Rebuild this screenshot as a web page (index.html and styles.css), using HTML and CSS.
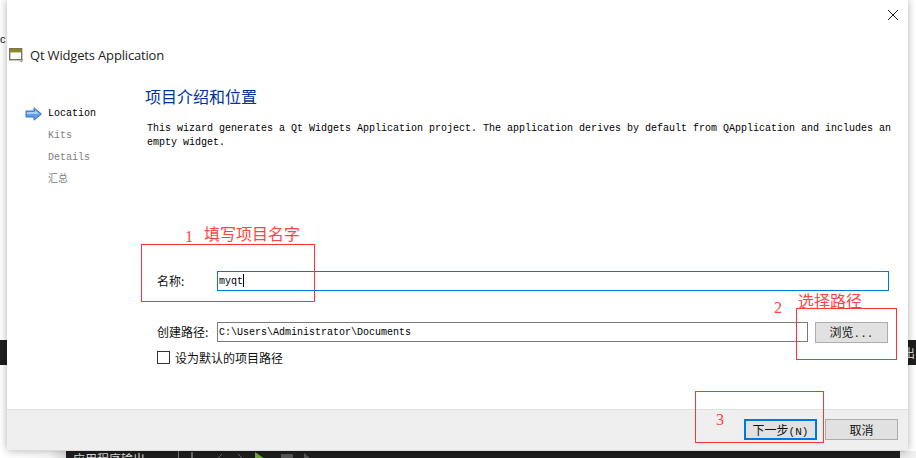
FILE: index.html
```html
<!DOCTYPE html>
<html lang="zh">
<head>
<meta charset="utf-8">
<title>Qt Widgets Application</title>
<link rel="stylesheet" href="styles.css">
</head>
<body>
<div class="desk-stub">c</div>
<div class="desk-band band-left"></div>
<div class="desk-band band-right">出</div>
<div class="desk-bottom">
  <span class="output-label">应用程序输出</span>
  <span class="tool-sep"></span>
  <svg class="tools" width="140" height="7" viewBox="0 0 140 7"><path d="M13 0v7" stroke="#b5b5b5" fill="none"/><path d="M39 6l4-4M59 2l4 4" stroke="#666" fill="none"/><path d="M76 0l10 7H76z" fill="#6fa83a"/><rect x="102" y="2" width="12" height="5" fill="#555"/><path d="M125 1l7 6h-7z" fill="#555"/></svg>
</div>
<main class="wizard">
  <button class="close" aria-label="关闭"><svg width="10" height="10" viewBox="0 0 10 10"><path d="M0 0l10 10M10 0L0 10" stroke="#222" fill="none"/></svg></button>
  <header class="title-row">
    <svg class="app-icon" width="14" height="15" viewBox="0 0 14 15"><rect x=".7" y=".7" width="12" height="11" fill="#fff" stroke="#77765c" stroke-width="1.4"/><rect x="1" y="1" width="11.5" height="3.4" fill="#8b8726"/><path d="M11 12.5l1.5 1.5 1-2.5" stroke="#8a8a8a" fill="none"/></svg>
    <span class="title-text">Qt Widgets Application</span>
  </header>
  <div class="body-row">
    <nav class="steps">
      <div class="step step-active">
        <svg class="step-arrow" width="18" height="14" viewBox="0 0 18 14"><path d="M1 4h8V.8L16.5 7 9 13.2V10H1z" fill="#5f9de8" stroke="#3b74bd"/><path d="M2 5h8V3l4 4H2z" fill="#a9cdf5"/></svg>
        <span>Location</span>
      </div>
      <div class="step">Kits</div>
      <div class="step">Details</div>
      <div class="step">汇总</div>
    </nav>
    <section class="content">
      <h1 class="heading">项目介绍和位置</h1>
      <p class="intro">This wizard generates a Qt Widgets Application project. The application derives by default from QApplication and includes an empty widget.</p>
      <div class="form">
        <div class="field field-name">
          <label class="field-label">名称:</label>
          <div class="input input-focus">myqt<span class="caret"></span></div>
        </div>
        <div class="field field-path">
          <label class="field-label">创建路径:</label>
          <div class="input input-path">C:\Users\Administrator\Documents</div>
          <button class="btn btn-browse">浏览<span class="mono">...</span></button>
        </div>
        <div class="check-row">
          <span class="check"></span>
          <span>设为默认的项目路径</span>
        </div>
      </div>
    </section>
  </div>
  <footer class="footer">
    <button class="btn btn-default">下一步<span class="mono">(N)</span></button>
    <button class="btn">取消</button>
  </footer>
  <div class="mark box1"></div>
  <div class="note num1">1</div>
  <div class="note txt1">填写项目名字</div>
  <div class="mark box2"></div>
  <div class="note num2">2</div>
  <div class="note txt2">选择路径</div>
  <div class="mark box3"></div>
  <div class="note num3">3</div>
</main>
</body>
</html>
```
FILE: styles.css
```css
* { box-sizing: border-box; }
html, body { margin: 0; padding: 0; }
body {
  width: 916px;
  height: 458px;
  position: relative;
  overflow: hidden;
  background: #fff;
  font-family: "Liberation Mono", "Noto Sans CJK SC", monospace;
  font-size: 10px;
  color: #000;
}
.desk-stub {
  position: absolute; left: 0; top: 33px;
  font: 11px/12px "Liberation Sans", sans-serif;
  color: #111;
}
.desk-band {
  position: absolute; top: 340px; height: 25px;
  background: #1f1f1f; color: #ddd; overflow: hidden;
  font: 12px/25px "Noto Sans CJK SC", sans-serif;
}
.band-left { left: 0; width: 8px; }
.band-right { left: 908px; width: 8px; text-indent: -5px; }
.desk-bottom {
  position: absolute; left: 0; right: 0; top: 451px; height: 7px;
  padding-left: 66px;
  background: linear-gradient(90deg, #fff 0, #f4f4f4 50px, #d8d8d8 66px, #1e1e1e 66px, #1e1e1e 900px, #e4e4e4 900px, #f2f2f2 100%);
  display: flex; align-items: flex-start; overflow: hidden;
  color: #ddd;
}
.output-label {
  font: 12px/14px "Noto Sans CJK SC", sans-serif;
  padding-left: 7px; margin-top: 1px; width: 112px;
}
.tool-sep { width: 1px; height: 7px; background: #777; }
.tools { margin-top: 1px; }

.wizard {
  position: absolute; left: 7px; top: 0;
  width: 901px; height: 450px;
  background: #fff;
  box-shadow: 0 0 8px rgba(0,0,0,.32);
  display: flex; flex-direction: column;
}
.close {
  position: absolute; right: 10px; top: 10px;
  padding: 0; border: 0; background: none; display: flex;
}
.title-row {
  display: flex; align-items: center; gap: 7px;
  height: 24px; margin-top: 43px; padding-left: 2px;
  flex: none;
}
.app-icon { flex: none; }
.title-text {
  font: 13px/18px "Open Sans", "Noto Sans", sans-serif;
  letter-spacing: -.17px;
  color: #222;
}
.body-row { flex: 1; display: flex; min-height: 0; }
.steps {
  width: 138px; flex: none; padding-top: 40px;
  display: flex; flex-direction: column; gap: 8px;
}
.step {
  height: 14px; line-height: 14px; padding-left: 41px;
  color: #808080; position: relative;
}
.step-active { color: #000; }
.step-arrow { position: absolute; left: 18px; top: 0; }
.content { flex: 1; display: flex; flex-direction: column; min-width: 0; }
.heading {
  margin: 18px 0 0;
  font: 400 16px/22px "Noto Sans CJK SC", sans-serif;
  color: #003399;
}
.intro {
  margin: 15px 18px 0 2px;
  width: 750px;
  line-height: 14px;
  font-size: 10px;
}
.form { margin-top: 121px; padding-left: 12px; }
.field { display: flex; align-items: center; height: 20px; }
.field-path { margin-top: 31px; }
.field-label {
  width: 60px; flex: none;
  font: 12px/20px "Noto Sans CJK SC", sans-serif;
  color: #111;
}
.input {
  height: 20px; line-height: 20px; padding-left: 1px;
  border: 1px solid #7a7a7a; background: #fff;
  white-space: nowrap;
}
.input-focus { width: 672px; border-color: #0078d7; }
.input-path { width: 591px; }
.caret { display: inline-block; width: 1px; height: 13px; background: #000; vertical-align: -3px; }
.btn {
  width: 73px; height: 21px; padding: 0;
  border: 1px solid #adadad; background: #e1e1e1;
  font: 12px/18px "Noto Sans CJK SC", sans-serif;
  color: #111;
}
.mono { font: 11px/18px "Liberation Mono", monospace; }
.btn-browse { margin-left: 7px; flex: none; }
.check-row {
  display: flex; align-items: center; gap: 5px;
  margin-top: 7px; height: 17px;
  font: 12px/17px "Noto Sans CJK SC", sans-serif;
  color: #111;
}
.check { width: 13px; height: 13px; border: 1px solid #333; background: #fff; flex: none; }
.footer {
  height: 41px; flex: none;
  background: #efefef; border-top: 1px solid #dfdfdf;
  display: flex; justify-content: flex-end; align-items: flex-start;
  gap: 8px; padding: 9px 10px 0 0;
}
.btn-default { height: 21px; border: 2px solid #0078d7; }

.mark { position: absolute; border: 1px solid #f33; }
.note {
  position: absolute; color: #f44;
  font: 16px/20px "Noto Sans CJK SC", sans-serif;
  white-space: nowrap;
}
.box1 { left: 134px; top: 244px; width: 174px; height: 58px; }
.box2 { left: 789px; top: 308px; width: 101px; height: 52px; }
.box3 { left: 688px; top: 391px; width: 129px; height: 52px; }
.num1 { left: 178px; top: 227px; font-family: "Liberation Serif", serif; }
.txt1 { left: 197px; top: 223px; }
.num2 { left: 767px; top: 298px; font-family: "Liberation Serif", serif; }
.txt2 { left: 791px; top: 290px; }
.num3 { left: 709px; top: 410px; font-family: "Liberation Serif", serif; }
```
